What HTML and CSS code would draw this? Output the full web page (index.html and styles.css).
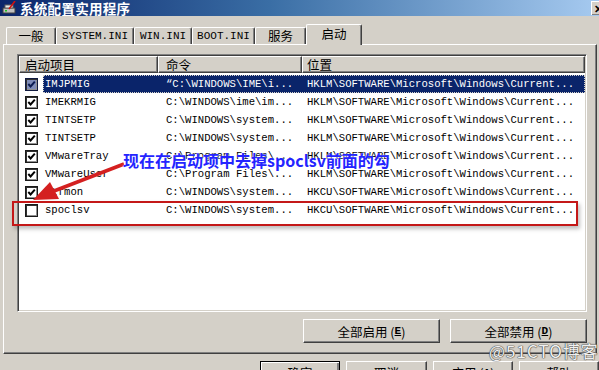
FILE: index.html
```html
<!DOCTYPE html>
<html>
<head>
<meta charset="utf-8">
<link rel="stylesheet" href="styles.css">
</head>
<body>
<div class="window">
  <div class="titlebar">
    <svg class="appicon" width="15" height="14" viewBox="0 0 15 14">
      <rect x="1" y="7" width="12" height="5" fill="#c0c0c0" stroke="#404040" stroke-width="1"/>
      <rect x="3" y="4" width="8" height="3" fill="#e8e8e8" stroke="#606060" stroke-width="1"/>
      <rect x="3" y="9" width="2" height="1.5" fill="#20c020"/>
      <line x1="7" y1="8" x2="13" y2="0" stroke="#d01010" stroke-width="1.6"/>
    </svg>
    <span class="title">系统配置实用程序</span>
    <span class="close">✕</span>
  </div>
  <div class="tabs">
    <div class="tab w1">一般</div>
    <div class="tab w2 mono">SYSTEM.INI</div>
    <div class="tab w3 mono">WIN.INI</div>
    <div class="tab w4 mono">BOOT.INI</div>
    <div class="tab w5">服务</div>
    <div class="tab active">启动</div>
  </div>
  <div class="panel">
    <div class="listbox">
      <div class="header">
        <div class="hcell h1">启动项目</div>
        <div class="hcell h2">命令</div>
        <div class="hcell h3">位置</div>
      </div>
      <div class="rows mono">
        <div class="row selected">
          <span class="chk on"><svg viewBox="0 0 9 9"><path d="M1.3 4 L3.6 6.4 L7.8 1.6"/></svg></span>
          <div class="sel"><span class="name">IMJPMIG</span><span class="cmd">“C:\WINDOWS\IME\i...</span><span class="loc">HKLM\SOFTWARE\Microsoft\Windows\Current...</span></div>
        </div>
        <div class="row">
          <span class="chk on"><svg viewBox="0 0 9 9"><path d="M1.3 4 L3.6 6.4 L7.8 1.6"/></svg></span>
          <div class="sel"><span class="name">IMEKRMIG</span><span class="cmd">C:\WINDOWS\ime\im...</span><span class="loc">HKLM\SOFTWARE\Microsoft\Windows\Current...</span></div>
        </div>
        <div class="row">
          <span class="chk on"><svg viewBox="0 0 9 9"><path d="M1.3 4 L3.6 6.4 L7.8 1.6"/></svg></span>
          <div class="sel"><span class="name">TINTSETP</span><span class="cmd">C:\WINDOWS\system...</span><span class="loc">HKLM\SOFTWARE\Microsoft\Windows\Current...</span></div>
        </div>
        <div class="row">
          <span class="chk on"><svg viewBox="0 0 9 9"><path d="M1.3 4 L3.6 6.4 L7.8 1.6"/></svg></span>
          <div class="sel"><span class="name">TINTSETP</span><span class="cmd">C:\WINDOWS\system...</span><span class="loc">HKLM\SOFTWARE\Microsoft\Windows\Current...</span></div>
        </div>
        <div class="row">
          <span class="chk on"><svg viewBox="0 0 9 9"><path d="M1.3 4 L3.6 6.4 L7.8 1.6"/></svg></span>
          <div class="sel"><span class="name">VMwareTray</span><span class="cmd">C:\Program Files\...</span><span class="loc">HKLM\SOFTWARE\Microsoft\Windows\Current...</span></div>
        </div>
        <div class="row">
          <span class="chk on"><svg viewBox="0 0 9 9"><path d="M1.3 4 L3.6 6.4 L7.8 1.6"/></svg></span>
          <div class="sel"><span class="name">VMwareUser</span><span class="cmd">C:\Program Files\...</span><span class="loc">HKLM\SOFTWARE\Microsoft\Windows\Current...</span></div>
        </div>
        <div class="row">
          <span class="chk on"><svg viewBox="0 0 9 9"><path d="M1.3 4 L3.6 6.4 L7.8 1.6"/></svg></span>
          <div class="sel"><span class="name">ctfmon</span><span class="cmd">C:\WINDOWS\system...</span><span class="loc">HKCU\SOFTWARE\Microsoft\Windows\Current...</span></div>
        </div>
        <div class="row">
          <span class="chk"></span>
          <div class="sel"><span class="name">spoclsv</span><span class="cmd">C:\WINDOWS\system...</span><span class="loc">HKCU\SOFTWARE\Microsoft\Windows\Current...</span></div>
        </div>
      </div>
    </div>
    <div class="panel-buttons">
      <div class="btn wide">全部启用 (<u>E</u>)</div>
      <div class="btn wide">全部禁用 (<u>D</u>)</div>
    </div>
  </div>
  <div class="footer">
    <div class="btn fbtn default">确定</div>
    <div class="btn fbtn w81">取消</div>
    <div class="btn fbtn">应用 (<u>A</u>)</div>
    <div class="btn fbtn">帮助</div>
  </div>

  <div class="redbox"></div>
  <svg class="arrow" width="599" height="370" viewBox="0 0 599 370">
    <line x1="124" y1="164" x2="54" y2="191" stroke="#d42020" stroke-width="3.5"/>
    <polygon points="33,200 50,182 59,199" fill="#d42020"/>
  </svg>
  <div class="callout">现在在启动项中去掉spoclsv前面的勾</div>
  <div class="watermark">@51CTO博客</div>
</div>
</body>
</html>
```

FILE: styles.css
```css
* { box-sizing: border-box; }
html, body { margin: 0; padding: 0; }
body {
  background: #d4d0c8;
  font-family: "Noto Sans CJK SC", sans-serif;
  font-size: 12px;
  color: #000;
}
.window {
  position: relative;
  width: 599px;
  height: 370px;
  overflow: hidden;
  background: #d4d0c8;
}
.mono {
  font-family: "Liberation Mono", "Noto Sans CJK SC", monospace;
}

/* title bar */
.titlebar {
  height: 16px;
  display: flex;
  align-items: center;
  background: linear-gradient(to right, #0a246a 0%, #3a6ea5 45%, #a6caf0 100%);
  padding-left: 2px;
}
.appicon { flex: none; margin-right: 3px; }
.title {
  color: #fff;
  font-weight: bold;
  font-size: 13.5px;
  line-height: 16px;
  letter-spacing: 0.3px;
}
.close {
  margin-left: auto;
  margin-right: -9px;
  width: 17px;
  height: 14px;
  background: #d4d0c8;
  border-top: 1px solid #fff;
  border-left: 1px solid #fff;
  box-shadow: inset -1px -1px #808080;
  font-size: 11px;
  font-weight: bold;
  line-height: 12px;
  padding-left: 2px;
  color: #000;
}

/* tabs */
.tabs {
  height: 28px;
  display: flex;
  align-items: flex-end;
  padding-left: 6px;
  position: relative;
  z-index: 2;
}
.tab {
  height: 17px;
  border-top: 1px solid #fff;
  border-left: 1px solid #fff;
  border-right: 1px solid #404040;
  box-shadow: inset -1px 0 #808080;
  border-radius: 2px 2px 0 0;
  display: flex;
  align-items: center;
  justify-content: center;
  font-size: 12.5px;
  line-height: 14px;
  background: #d4d0c8;
}
.tab.mono { font-size: 11px; }
.w1 { width: 50px; }
.w2 { width: 78px; }
.w3 { width: 58px; }
.w4 { width: 63px; }
.w5 { width: 51px; }
.tab.active {
  width: 56px;
  height: 21px;
  margin-bottom: -1px;
  align-items: flex-start;
  padding-top: 2px;
}

/* panel */
.panel {
  margin-left: 3px;
  width: 594px;
  height: 310px;
  border-top: 1px solid #fff;
  border-left: 1px solid #fff;
  border-right: 1px solid #404040;
  border-bottom: 1px solid #404040;
  box-shadow: inset -1px -1px #808080;
  padding-top: 9px;
  padding-left: 13px;
  position: relative;
  z-index: 1;
}
.listbox {
  width: 570px;
  height: 258px;
  background: #fff;
  border-top: 1px solid #808080;
  border-left: 1px solid #808080;
  border-right: 1px solid #fff;
  border-bottom: 1px solid #fff;
  box-shadow: inset 1px 1px #404040, inset -1px -1px #d4d0c8;
  padding: 1px;
}
.header {
  display: flex;
  height: 17px;
}
.hcell {
  height: 17px;
  background: #d4d0c8;
  border-top: 1px solid #fff;
  border-left: 1px solid #fff;
  border-right: 1px solid #404040;
  border-bottom: 1px solid #404040;
  box-shadow: inset -1px -1px #808080;
  font-size: 12.5px;
  line-height: 15px;
}
.h1 { width: 139px; padding-left: 5px; }
.h2 { width: 144px; padding-left: 7px; }
.h3 { width: 283px; padding-left: 4px; }

.rows {
  padding-top: 2px;
  font-size: 10.6px;
}
.row {
  display: flex;
  height: 18px;
  line-height: 18px;
  align-items: center;
}
.chk {
  flex: none;
  width: 13px;
  height: 13px;
  margin-left: 6px;
  margin-right: 5px;
  background: #fff;
  border: 1px solid #1a1a1a;
  box-shadow: inset 1px 1px #303030, inset -1px -1px #909090;
  display: flex;
  align-items: center;
  justify-content: center;
}
.chk svg {
  width: 9px;
  height: 9px;
}
.chk svg path {
  fill: none;
  stroke: #000;
  stroke-width: 2;
}
.sel {
  flex: 1;
  display: flex;
  height: 18px;
  white-space: nowrap;
}
.name { width: 115px; padding-left: 2px; }
.cmd { width: 144px; padding-left: 8px; }
.loc { flex: 1; padding-left: 5px; }
.row.selected .sel {
  background: #0a246a;
  color: #fff;
  outline: 1px dotted #d4d0c8;
  outline-offset: -1px;
}
.row.selected .chk {
  background: #7f8cb8;
  border-color: #101a40;
}
.row.selected .chk svg path { stroke: #0a1a50; }

/* buttons */
.panel-buttons {
  display: flex;
  justify-content: flex-end;
  gap: 10px;
  margin-top: 7px;
  padding-right: 9px;
}
.btn {
  height: 24px;
  background: #d4d0c8;
  border-top: 1px solid #fff;
  border-left: 1px solid #fff;
  border-right: 1px solid #404040;
  border-bottom: 1px solid #404040;
  box-shadow: inset -1px -1px #808080;
  display: flex;
  align-items: center;
  justify-content: center;
  font-size: 12.5px;
}
.btn u { font-family: "Liberation Mono", monospace; font-weight: bold; font-size: 11px; }
.wide { width: 137px; }
.footer {
  display: flex;
  gap: 6px;
  margin-top: 7px;
  padding-left: 260px;
}
.fbtn { width: 80px; height: 23px; flex: none; }
.w81 { width: 81px; }
.fbtn.default {
  border: 1px solid #000;
  box-shadow: inset 1px 1px #fff, inset -2px -2px #808080;
}

/* annotation overlay */
.redbox {
  position: absolute;
  left: 12px;
  top: 201px;
  width: 566px;
  height: 25px;
  border: 2px solid #c41818;
  box-shadow: 2px 3px 4px rgba(0,0,0,0.25);
  z-index: 5;
}
.arrow {
  position: absolute;
  left: 0;
  top: 0;
  z-index: 6;
}
.callout {
  position: absolute;
  left: 123px;
  top: 150px;
  color: #2424ff;
  font-weight: bold;
  font-size: 16px;
  line-height: 20px;
  white-space: nowrap;
  text-shadow: 0 0 2px #fff;
  z-index: 7;
}
.watermark {
  position: absolute;
  left: 489px;
  top: 341px;
  font-size: 17px;
  line-height: 20px;
  letter-spacing: 1px;
  white-space: nowrap;
  color: #f0f0f0;
  text-shadow: 0 0 1px #444, 0 0 1px #444, 0 0 1px #444;
  z-index: 7;
}
```
